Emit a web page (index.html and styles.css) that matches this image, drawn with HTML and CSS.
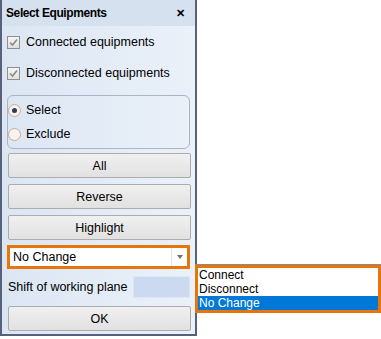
FILE: index.html
```html
<!DOCTYPE html>
<html lang="en">
<head>
    <meta charset="UTF-8">
    <title>Select Equipments</title>
    <link rel="stylesheet" href="styles.css">
</head>
<body>

    <div class="window">
        <div class="titlebar">
            <span>Select Equipments</span>
            <span class="close">&#x2715;</span>
        </div>

        <div class="content">
            <label class="check"><span class="box"><svg width="9" height="9" viewBox="0 0 9 9"><path d="M1 4.5 L3.5 7 L8 1.5" fill="none" stroke="#8a8a8a" stroke-width="1.6"/></svg></span>Connected equipments</label>
            <label class="check"><span class="box"><svg width="9" height="9" viewBox="0 0 9 9"><path d="M1 4.5 L3.5 7 L8 1.5" fill="none" stroke="#8a8a8a" stroke-width="1.6"/></svg></span>Disconnected equipments</label>

            <div class="group">
                <label class="radio"><span class="dot on"></span>Select</label>
                <label class="radio"><span class="dot"></span>Exclude</label>
            </div>

            <button class="btn">All</button>
            <button class="btn">Reverse</button>
            <button class="btn">Highlight</button>

            <div class="combo">
                <span class="combo-text">No Change</span>
                <span class="combo-arrow"></span>
            </div>

            <div class="shift-row">
                <span>Shift of working plane</span>
                <span class="shift-input"></span>
            </div>

            <button class="btn">OK</button>
        </div>
    </div>

    <!-- dropped list of the combo -->
    <div class="droplist">
        <div class="item">Connect</div>
        <div class="item">Disconnect</div>
        <div class="item selected">No Change</div>
    </div>

</body>
</html>
```

FILE: styles.css
```css
body {
    margin: 0;
    background-color: #ffffff;
    font-family: Tahoma, "Liberation Sans", sans-serif;
    font-size: 12.5px;
    color: #000;
}

.window {
    width: 193px;
    height: 334px;
    border: 2px solid #56627c;
    border-top: none;
    background: linear-gradient(to right, #dce6f3, #eaf1f9);
    display: flex;
    flex-direction: column;
}

.titlebar {
    height: 26px;
    background-color: #d5e1ef;
    display: flex;
    align-items: center;
    justify-content: space-between;
    padding: 0 10px 0 4px;
    font-weight: bold;
    font-size: 12px;
    letter-spacing: -0.4px;
}

.close {
    font-weight: bold;
    font-size: 11px;
}

.content {
    padding: 0 5px 0 5px;
    display: flex;
    flex-direction: column;
}

.check {
    display: flex;
    align-items: center;
    height: 30px;
    margin-top: 1px;
}

.box {
    width: 11px;
    height: 11px;
    border: 1px solid #8e8f8f;
    background: linear-gradient(#f4f4f4, #e0e0e0);
    margin: 0 6px 0 0;
    display: flex;
    align-items: center;
    justify-content: center;
}

.group {
    margin-top: 7px;
    height: 52px;
    border: 1px solid #a9b5c6;
    border-radius: 6px;
    display: flex;
    flex-direction: column;
    justify-content: center;
}

.radio {
    display: flex;
    align-items: center;
    height: 24px;
}

.dot {
    width: 11px;
    height: 11px;
    border: 1px solid #d0a88c;
    border-radius: 50%;
    background: #f6f3f0;
    margin: 0 5px 0 0;
    display: flex;
    align-items: center;
    justify-content: center;
}

.dot.on::after {
    content: "";
    width: 5px;
    height: 5px;
    border-radius: 50%;
    background: #2d3d55;
}

.btn {
    height: 25px;
    margin: 4px 0 0 1px;
    width: 183px;
    border: 1px solid #acacac;
    border-radius: 2px;
    background: linear-gradient(#f0f0f0, #e1e1e1);
    font-family: inherit;
    font-size: 12.5px;
    padding: 0;
}

.btn + .btn {
    margin-top: 6px;
}

.combo {
    margin-top: 5px;
    height: 18px;
    border: 3px solid #e8740c;
    background: #ffffff;
    display: flex;
    align-items: center;
}

.combo-text {
    flex: 1;
    padding-left: 3px;
}

.combo-arrow {
    width: 15px;
    height: 100%;
    border-left: 1px solid #e3e3e3;
    display: flex;
    align-items: center;
    justify-content: center;
}

.combo-arrow::after {
    content: "";
    border-left: 3px solid transparent;
    border-right: 3px solid transparent;
    border-top: 4px solid #707070;
}

.shift-row {
    display: flex;
    align-items: center;
    justify-content: space-between;
    height: 21px;
    margin-top: 7px;
    padding: 0 0 0 1px;
}

.shift-input {
    width: 55px;
    height: 20px;
    background: #cbdaf0;
    border: 1px solid #dde6f2;
}

.shift-row + .btn {
    margin-top: 9px;
}

.droplist {
    position: absolute;
    left: 195px;
    top: 265px;
    width: 180px;
    border: 3px solid #e8740c;
    background: #ffffff;
    box-shadow: 0 -1px 0 #8a8a8a;
    font-size: 12px;
}

.item {
    height: 14px;
    line-height: 14px;
    padding-left: 1px;
}

.item.selected {
    background: #0078d7;
    color: #ffffff;
}
```
